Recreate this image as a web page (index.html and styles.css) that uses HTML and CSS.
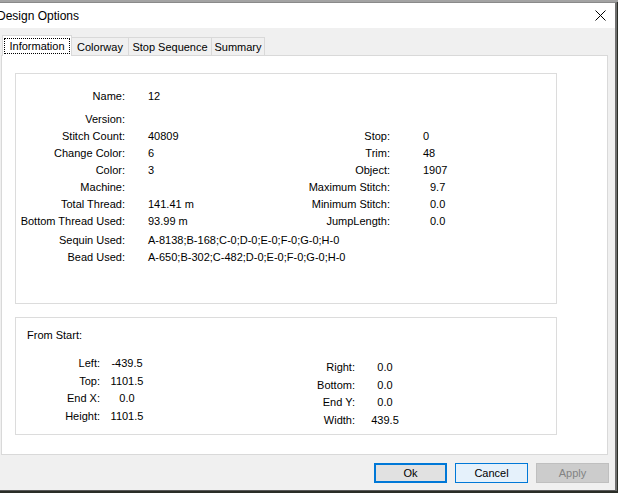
FILE: index.html
```html
<!DOCTYPE html>
<html lang="en">
<head>
    <meta charset="UTF-8">
    <title>Design Options</title>
    <link rel="stylesheet" href="styles.css">
</head>
<body>
    <div class="desk-strip"></div>
    <div class="window">
        <div class="titlebar">
            <span class="title">Design Options</span>
            <svg class="close" width="11" height="11" viewBox="0 0 11 11">
                <path d="M0.5 0.5 L10.5 10.5 M10.5 0.5 L0.5 10.5" stroke="#000" stroke-width="1" fill="none"/>
            </svg>
        </div>
        <div class="dialog">
            <div class="tabs">
                <div class="tab active"><span class="focus">Information</span></div>
                <div class="tab">Colorway</div>
                <div class="tab">Stop Sequence</div>
                <div class="tab">Summary</div>
            </div>
            <div class="panel">
                <div class="group info-group">
                    <div class="row"><span class="lbl">Name:</span><span class="val">12</span></div>
                    <div class="row version"><span class="lbl">Version:</span><span class="val"></span></div>
                    <div class="row"><span class="lbl">Stitch Count:</span><span class="val">40809</span><span class="lbl2">Stop:</span><span class="val2">0</span></div>
                    <div class="row"><span class="lbl">Change Color:</span><span class="val">6</span><span class="lbl2">Trim:</span><span class="val2">48</span></div>
                    <div class="row"><span class="lbl">Color:</span><span class="val">3</span><span class="lbl2">Object:</span><span class="val2">1907</span></div>
                    <div class="row"><span class="lbl">Machine:</span><span class="val"></span><span class="lbl2">Maximum Stitch:</span><span class="val2 inset">9.7</span></div>
                    <div class="row"><span class="lbl">Total Thread:</span><span class="val">141.41 m</span><span class="lbl2">Minimum Stitch:</span><span class="val2 inset">0.0</span></div>
                    <div class="row"><span class="lbl">Bottom Thread Used:</span><span class="val">93.99 m</span><span class="lbl2">JumpLength:</span><span class="val2 inset">0.0</span></div>
                    <div class="row sequin"><span class="lbl">Sequin Used:</span><span class="val wide">A-8138;B-168;C-0;D-0;E-0;F-0;G-0;H-0</span></div>
                    <div class="row"><span class="lbl">Bead Used:</span><span class="val wide">A-650;B-302;C-482;D-0;E-0;F-0;G-0;H-0</span></div>
                </div>
                <div class="group start-group">
                    <div class="start-title">From Start:</div>
                    <div class="start-cols">
                        <div class="col left-col">
                            <div class="srow"><span class="slbl">Left:</span><span class="sval">-439.5</span></div>
                            <div class="srow"><span class="slbl">Top:</span><span class="sval">1101.5</span></div>
                            <div class="srow"><span class="slbl">End X:</span><span class="sval">0.0</span></div>
                            <div class="srow"><span class="slbl">Height:</span><span class="sval">1101.5</span></div>
                        </div>
                        <div class="col right-col">
                            <div class="srow"><span class="slbl">Right:</span><span class="sval">0.0</span></div>
                            <div class="srow"><span class="slbl">Bottom:</span><span class="sval">0.0</span></div>
                            <div class="srow"><span class="slbl">End Y:</span><span class="sval">0.0</span></div>
                            <div class="srow"><span class="slbl">Width:</span><span class="sval">439.5</span></div>
                        </div>
                    </div>
                </div>
            </div>
            <div class="buttons">
                <button class="btn default">Ok</button>
                <button class="btn hover">Cancel</button>
                <button class="btn disabled">Apply</button>
            </div>
        </div>
    </div>
</body>
</html>
```

FILE: styles.css
```css
* {
    margin: 0;
    padding: 0;
    box-sizing: border-box;
}
body {
    width: 618px;
    height: 493px;
    overflow: hidden;
    background-color: #2a2d27;
    font-family: "Liberation Sans", Arial, sans-serif;
    font-size: 11px;
    color: #000;
}
.desk-strip {
    height: 2px;
    background-color: #a3a3a3;
}
.window {
    width: 617px;
    height: 489px;
    background-color: #f0f0f0;
    border-top: 1px solid #8a8a8a;
    border-right: 2px solid #6f6f6f;
    border-bottom: 1px solid #5a5a5a;
    display: flex;
    flex-direction: column;
}
.titlebar {
    height: 25px;
    background-color: #fff;
    display: flex;
    align-items: center;
    justify-content: space-between;
    padding-right: 9px;
}
.title {
    font-size: 12px;
    margin-left: -3px;
}
.close {
    display: block;
}
.dialog {
    flex: 1;
    display: flex;
    flex-direction: column;
}
.tabs {
    display: flex;
    align-items: flex-end;
    height: 27px;
    padding-left: 2px;
}
.tab {
    height: 18px;
    line-height: 18px;
    text-align: center;
    background-color: #f0f0f0;
    border: 1px solid #d9d9d9;
    border-bottom: none;
    margin-right: -1px;
}
.tab:nth-child(1) { width: 70px; }
.tab:nth-child(2) { width: 58px; }
.tab:nth-child(3) { width: 84px; }
.tab:nth-child(4) { width: 54px; }
.tab.active {
    height: 21px;
    margin-bottom: -1px;
    background-color: #fff;
    position: relative;
    z-index: 1;
    padding: 2px 1px 0 1px;
    line-height: 15px;
}
.focus {
    display: block;
    height: 16px;
    border: 1px dotted #000;
    line-height: 14px;
}
.panel {
    margin-left: 1px;
    width: 607px;
    height: 400px;
    background-color: #fff;
    border: 1px solid #d9d9d9;
    padding: 17px 0 0 13px;
}
.group {
    width: 542px;
    border: 1px solid #dcdcdc;
}
.info-group {
    height: 231px;
    padding-top: 14px;
}
.row {
    display: flex;
    height: 17px;
    line-height: 17px;
    white-space: nowrap;
}
.row.version {
    margin-top: 6px;
}
.row.sequin {
    margin-top: 2px;
}
.lbl {
    width: 109px;
    text-align: right;
}
.val {
    width: 180px;
    padding-left: 23px;
}
.val.wide {
    width: auto;
}
.lbl2 {
    width: 85px;
    text-align: right;
}
.val2 {
    padding-left: 33px;
}
.val2.inset {
    padding-left: 40px;
}
.start-group {
    margin-top: 13px;
    height: 118px;
    padding: 9px 0 0 0;
}
.start-title {
    height: 17px;
    line-height: 17px;
    padding-left: 11px;
}
.start-cols {
    display: flex;
    margin-top: 11px;
}
.col {
    display: flex;
    flex-direction: column;
}
.left-col {
    width: 240px;
}
.left-col .slbl {
    width: 84px;
}
.left-col .sval {
    margin-left: 9px;
}
.right-col {
    margin-top: 4px;
}
.right-col .slbl {
    width: 99px;
}
.right-col .sval {
    margin-left: 12px;
}
.srow {
    display: flex;
    height: 17.5px;
    line-height: 17.5px;
}
.slbl {
    text-align: right;
}
.sval {
    width: 36px;
    text-align: center;
}
.buttons {
    display: flex;
    justify-content: flex-end;
    gap: 8px;
    margin-top: 8px;
    padding-right: 6px;
}
.btn {
    width: 73px;
    height: 20px;
    font-family: "Liberation Sans", Arial, sans-serif;
    font-size: 11px;
    color: #000;
    background-color: #e1e1e1;
    border: 1px solid #adadad;
}
.btn.default {
    border: 2px solid #0078d7;
}
.btn.hover {
    background-color: #e5f1fb;
    border: 1px solid #0078d7;
}
.btn.disabled {
    background-color: #cccccc;
    border: 1px solid #bfbfbf;
    color: #838383;
}
```
